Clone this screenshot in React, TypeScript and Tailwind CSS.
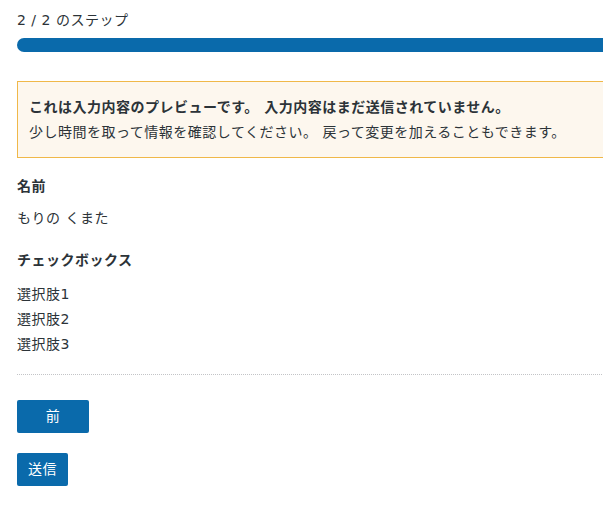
import React from "react";

const choices = ["選択肢1", "選択肢2", "選択肢3"];

const App: React.FC = () => {
  return (
    <div
      className="w-[603px] h-[507px] overflow-hidden bg-white text-[#2c3338] text-[14px] tracking-[0.5px]"
      style={{ fontFamily: '"DejaVu Sans", "Noto Sans CJK JP", sans-serif' }}
    >
      <div className="w-[640px] pl-[17px] pt-[10px]">
        {/* step indicator */}
        <p className="leading-[20px]">2 / 2 のステップ</p>
        <div className="mt-[8px] h-[14px] rounded-l-full bg-[#0a6aab]" />

        {/* preview notice */}
        <div className="mt-[29px] border border-[#f0b849] bg-[#fdf7ee] pl-[11px] pr-[13px] pt-[13px] pb-[13px]">
          <p className="font-bold leading-[24px]">
            これは入力内容のプレビューです。 入力内容はまだ送信されていません。
          </p>
          <p className="mt-[1px] leading-[24px]">
            少し時間を取って情報を確認してください。 戻って変更を加えることもできます。
          </p>
        </div>

        {/* fields */}
        <div className="mt-[16px]">
          <p className="font-bold leading-[24px]">名前</p>
          <p className="mt-[8px] leading-[24px]">もりの くまた</p>
        </div>
        <div className="mt-[18px]">
          <p className="font-bold leading-[24px]">チェックボックス</p>
          <div className="mt-[10px] flex flex-col">
            {choices.map((c) => (
              <p key={c} className="leading-[25px]">
                {c}
              </p>
            ))}
          </div>
        </div>

        <div className="mt-[17px] border-t border-dotted border-[#c3c4c7]" />

        {/* actions */}
        <div className="mt-[25px] flex flex-col items-start gap-[20px]">
          <button className="h-[33px] w-[72px] rounded-[2px] bg-[#0a6aab] text-white">
            前
          </button>
          <button className="h-[33px] px-[11px] rounded-[2px] bg-[#0a6aab] text-white">
            送信
          </button>
        </div>
      </div>
    </div>
  );
};

export default App;
